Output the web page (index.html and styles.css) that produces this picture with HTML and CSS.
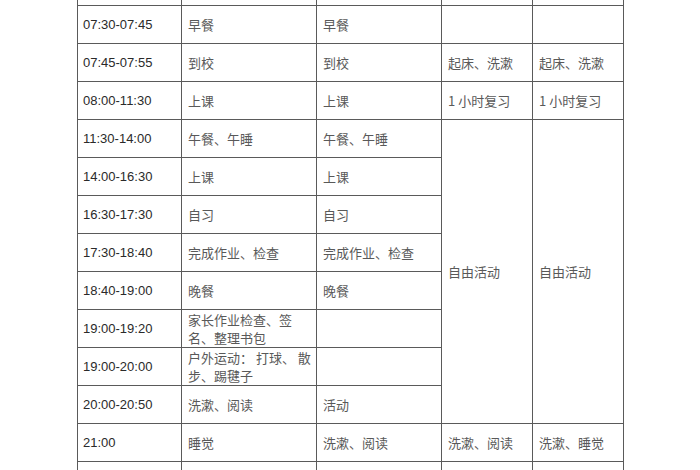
FILE: index.html
```html
<!DOCTYPE html>
<html lang="zh">
<head>
<meta charset="utf-8">
<title>作息时间表</title>
<link rel="stylesheet" href="styles.css">
</head>
<body>
<table class="schedule">
  <colgroup>
    <col class="c-time">
    <col class="c-a">
    <col class="c-b">
    <col class="c-c">
    <col class="c-d">
  </colgroup>
  <tbody>
    <tr><td class="time"></td><td></td><td></td><td></td><td></td></tr>
    <tr><td class="time">07:30-07:45</td><td>早餐</td><td>早餐</td><td></td><td></td></tr>
    <tr><td class="time">07:45-07:55</td><td>到校</td><td>到校</td><td>起床、洗漱</td><td>起床、洗漱</td></tr>
    <tr><td class="time">08:00-11:30</td><td>上课</td><td>上课</td><td>1 小时复习</td><td>1 小时复习</td></tr>
    <tr><td class="time">11:30-14:00</td><td>午餐、午睡</td><td>午餐、午睡</td><td rowspan="8">自由活动</td><td rowspan="8">自由活动</td></tr>
    <tr><td class="time">14:00-16:30</td><td>上课</td><td>上课</td></tr>
    <tr><td class="time">16:30-17:30</td><td>自习</td><td>自习</td></tr>
    <tr><td class="time">17:30-18:40</td><td>完成作业、检查</td><td>完成作业、检查</td></tr>
    <tr><td class="time">18:40-19:00</td><td>晚餐</td><td>晚餐</td></tr>
    <tr><td class="time">19:00-19:20</td><td class="wrap">家长作业检查、签<br>名、整理书包</td><td></td></tr>
    <tr><td class="time">19:00-20:00</td><td class="wrap">户外运动： 打球、 散<br>步、踢毽子</td><td></td></tr>
    <tr><td class="time">20:00-20:50</td><td>洗漱、阅读</td><td>活动</td></tr>
    <tr><td class="time">21:00</td><td>睡觉</td><td>洗漱、阅读</td><td>洗漱、阅读</td><td>洗漱、睡觉</td></tr>
    <tr><td class="time"></td><td></td><td></td><td></td><td></td></tr>
  </tbody>
</table>
</body>
</html>
```
FILE: styles.css
```css
html, body {
  margin: 0;
  padding: 0;
  background: #ffffff;
  overflow: hidden;
}

.schedule {
  border-collapse: collapse;
  table-layout: fixed;
  width: 546px;
  margin: -33px 0 0 77px;
  font-family: "Noto Sans CJK SC", "Liberation Sans", sans-serif;
  font-size: 13px;
  color: #595959;
}

.c-time { width: 104px; }
.c-a { width: 135px; }
.c-b { width: 125px; }
.c-c { width: 91px; }
.c-d { width: 91px; }

.schedule td {
  border: 1px solid #5a5a5a;
  height: 37px;
  padding: 0 6px;
  line-height: 19px;
  vertical-align: middle;
  white-space: nowrap;
  overflow: hidden;
}

.schedule td.time {
  font-family: "Liberation Sans", Arial, sans-serif;
  font-size: 13px;
  color: #2a2a2a;
  padding-left: 5px;
}

.schedule td.wrap {
  line-height: 18px;
}
```
